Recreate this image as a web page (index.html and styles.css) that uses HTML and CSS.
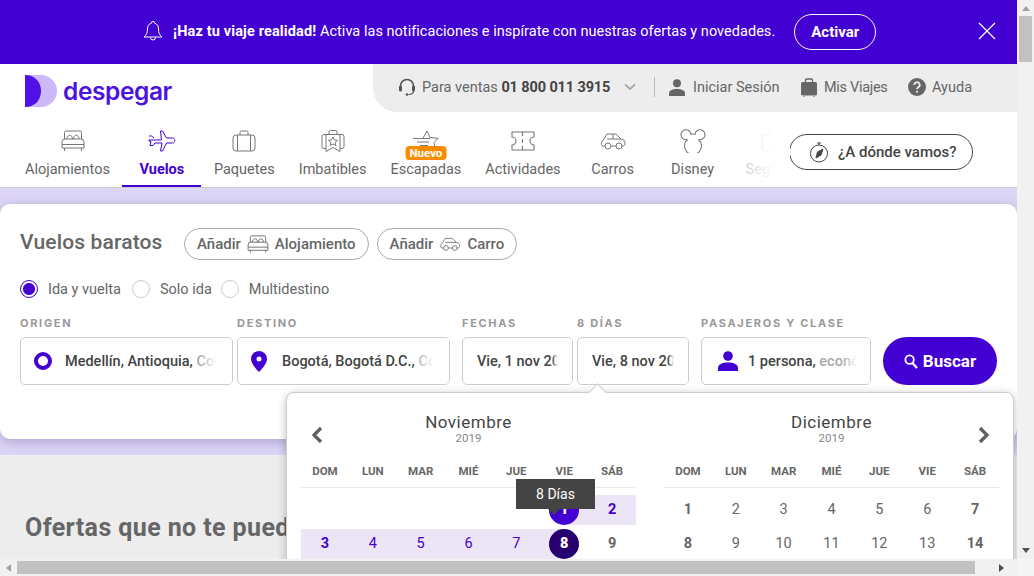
FILE: index.html
```html
<!DOCTYPE html>
<html lang="es">
<head>
<meta charset="utf-8">
<title>Vuelos baratos</title>
<link rel="stylesheet" href="styles.css">
</head>
<body>
<div class="app">
  <div class="viewport">
    <section class="banner">
      <svg class="bell" width="20" height="22" viewBox="0 0 20 22" fill="none" stroke="#fff" stroke-width="1"><path d="M10 1.500a1.600 1.600 0 0 1 1.600 1.700C14.400 4 15.500 6 15.500 9c0 4 1 6 3.500 8H1c2.500-2 3.500-4 3.500-8 0-3 1.100-5 3.900-5.800A1.600 1.600 0 0 1 10 1.500z"/><path d="M7.500 17.500a2.500 2.500 0 0 0 5 0"/></svg>
      <p class="banner-text"><strong>¡Haz tu viaje realidad!</strong> Activa las notificaciones e inspírate con nuestras ofertas y novedades.</p>
      <span class="activate">Activar</span>
      <svg class="close" width="18" height="18" viewBox="0 0 18 18" stroke="#fff" stroke-width="1.200"><path d="M1 1l16 16M17 1L1 17"/></svg>
    </section>

    <header class="topbar">
      <a class="logo">
        <svg width="32" height="32" viewBox="0 0 32 32"><path d="M0 0h16a16 16 0 0 1 0 32H0z" fill="#cbb9f9"/><path d="M0 0c10 0 16 7 16 16S10 32 0 32z" fill="#5010e6"/></svg>
        <span class="logo-text">despegar</span>
      </a>
      <div class="util">
        <svg class="u-head" width="18" height="18" viewBox="0 0 18 18" fill="none"><path d="M2.500 11V8a6.500 6.500 0 0 1 13 0v3" stroke="#555" stroke-width="1.600"/><rect x="1" y="7.500" width="3" height="6" rx="1.500" fill="#555"/><rect x="14" y="7.500" width="3" height="6" rx="1.500" fill="#555"/><path d="M15.500 13c0 2.500-2 3.500-5 3.500" stroke="#555" stroke-width="1.200"/><circle cx="9" cy="16.500" r="1.300" fill="#555"/></svg>
        <span class="sales">Para ventas <b>01 800 011 3915</b></span>
        <svg class="u-chev" width="12" height="8" viewBox="0 0 12 8" fill="none" stroke="#aaa" stroke-width="2"><path d="M1 1.500l5 4.500 5-4.500"/></svg>
        <i class="u-div"></i>
        <svg class="u-user" width="16" height="17" viewBox="0 0 16 17" fill="#666"><circle cx="8" cy="4.300" r="4"/><path d="M0 17v-2.500C0 11.500 3 10 8 10s8 1.500 8 4.500V17z"/></svg>
        <span class="u-login">Iniciar Sesión</span>
        <svg class="u-bag" width="18" height="19" viewBox="0 0 18 19"><path d="M5.500 4V2a1 1 0 0 1 1-1h5a1 1 0 0 1 1 1v2" fill="none" stroke="#666" stroke-width="1.300"/><rect x="1" y="4" width="16" height="13.500" rx="1.500" fill="#666"/><path d="M4 18v1M14 18v1" stroke="#666"/></svg>
        <span class="u-trips">Mis Viajes</span>
        <svg class="u-help" width="18" height="18" viewBox="0 0 18 18"><circle cx="9" cy="9" r="9" fill="#666"/><path d="M6.300 7a2.700 2.700 0 1 1 4 2.300C9.300 9.900 9 10.300 9 11.200" fill="none" stroke="#ededed" stroke-width="1.800"/><circle cx="9" cy="13.800" r="1.100" fill="#ededed"/></svg>
        <span class="u-aid">Ayuda</span>
      </div>
    </header>

    <nav class="nav">
      <a class="nav-item">
        <svg class="bed" width="24" height="22" viewBox="0 0 24 22" fill="none" stroke="#777" stroke-width="1"><path d="M3.500 9V2.500A1.500 1.500 0 0 1 5 1h14a1.500 1.500 0 0 1 1.500 1.500V9"/><path d="M6 9c0-5 5.500-5 5.500 0M12.500 9c0-5 5.500-5 5.500 0"/><path d="M1 12a3 3 0 0 1 3-3h16a3 3 0 0 1 3 3v6H1zM1 14.500h22M3.500 18v3M20.500 18v3"/></svg>
        <span>Alojamientos</span>
      </a>
      <a class="nav-item active">
        <svg width="28" height="22" viewBox="0 0 28 22" fill="none" stroke="#4300d2" stroke-width="1"><path d="M12.500 1h2l4 7h6c3 0 3 5 0 5h-6l-4 8h-2l1.500-8H7l-2 2.500H2l1-4-2-.5v-1h9l3.500-.2L12.500 1zM1 6h2.500L6 8"/></svg>
        <span>Vuelos</span>
      </a>
      <a class="nav-item">
        <svg width="24" height="22" viewBox="0 0 24 22" fill="none" stroke="#777" stroke-width="1"><rect x="1" y="5" width="22" height="16" rx="3"/><path d="M8 5V2.500A1.500 1.500 0 0 1 9.500 1h5A1.500 1.500 0 0 1 16 2.500V5M5.500 5v16M18.500 5v16"/></svg>
        <span>Paquetes</span>
      </a>
      <a class="nav-item">
        <svg width="24" height="23" viewBox="0 0 24 23" fill="none" stroke="#777" stroke-width="1"><path d="M5 5H3a2 2 0 0 0-2 2v10a2 2 0 0 0 2 2h2M19 5h2a2 2 0 0 1 2 2v10a2 2 0 0 1-2 2h-2M8 5V2.500A1.500 1.500 0 0 1 9.500 1h5A1.500 1.500 0 0 1 16 2.500V5M5 5h14v17l-7-4-7 4z"/><path d="M12 7.500l1.400 2.900 3.100.4-2.300 2.100.6 3.100-2.800-1.500-2.800 1.500.6-3.100-2.300-2.100 3.100-.4z"/></svg>
        <span>Imbatibles</span>
      </a>
      <a class="nav-item">
        <svg width="28" height="22" viewBox="0 0 28 22" fill="none" stroke="#777" stroke-width="1"><path d="M11 8L15 1l3 6.500 8 .8-4 4.200 1 6M1 8.500h17M5 12h12M8 15.500h8"/></svg>
        <em class="badge">Nuevo</em>
        <span>Escapadas</span>
      </a>
      <a class="nav-item">
        <svg width="24" height="20" viewBox="0 0 24 20" fill="none" stroke="#777" stroke-width="1.100"><path d="M1 1h22v5a4 4 0 0 0 0 8v5H1v-5a4 4 0 0 0 0-8zM11.500 1v4M11.500 8v4M11.500 15v4"/></svg>
        <span>Actividades</span>
      </a>
      <a class="nav-item">
        <svg width="26" height="20" viewBox="0 0 26 20" fill="none" stroke="#777" stroke-width="1"><path d="M5 15H3c-2 0-2-3-1-4.500L4 8l3-5h9l5 5c3 .5 4 1.500 4 4 0 2-1 3-2 3h-2M11 15h5M7 8h14M13 3v5"/><circle cx="8" cy="15" r="3"/><circle cx="19" cy="15" r="3"/></svg>
        <span>Carros</span>
      </a>
      <a class="nav-item">
        <svg width="26" height="24" viewBox="0 0 26 24" fill="none" stroke="#777" stroke-width="1.100"><path d="M7.500 10.500A5 5 0 1 1 11 5.200a8.500 8.500 0 0 1 4 0 5 5 0 1 1 3.500 5.300 8.500 8.500 0 1 1-11 0z"/></svg>
        <span>Disney</span>
      </a>
      <a class="nav-item faded">
        <svg width="24" height="22" viewBox="0 0 24 22" fill="none" stroke="#888" stroke-width="1"><rect x="1" y="5" width="22" height="16" rx="3"/><path d="M8 5V2.500A1.500 1.500 0 0 1 9.500 1h5A1.500 1.500 0 0 1 16 2.500V5M12 10v6M9 13h6"/></svg>
        <span>Seguros</span>
      </a>
      <a class="explore">
        <svg width="20" height="21" viewBox="0 0 20 21" fill="none" stroke="#444" stroke-width="1"><circle cx="10" cy="11.500" r="8.500"/><path d="M8 1h4M10 1v2"/><path d="M14 7l-5.500 3-1.500 6 5-3z" fill="#444"/></svg>
        <span>¿A dónde vamos?</span>
      </a>
    </nav>

    <section class="hero">
      <div class="card">
        <div class="title-row">
          <h1>Vuelos baratos</h1>
          <a class="pill">Añadir
            <svg width="22" height="18" viewBox="0 0 24 20" fill="none" stroke="#666" stroke-width="1"><path d="M3.500 8V2.500A1.500 1.500 0 0 1 5 1h14a1.500 1.500 0 0 1 1.500 1.500V8"/><path d="M6 8c0-5 5.500-5 5.500 0M12.500 8c0-5 5.500-5 5.500 0"/><path d="M1 11a3 3 0 0 1 3-3h16a3 3 0 0 1 3 3v6H1zM1 13.500h22M3.500 17v2.500M20.500 17v2.500"/></svg>
            Alojamiento</a>
          <a class="pill">Añadir
            <svg width="22" height="16" viewBox="0 0 26 20" fill="none" stroke="#666" stroke-width="1"><path d="M5 15H3c-2 0-2-3-1-4.500L4 8l3-5h9l5 5c3 .5 4 1.500 4 4 0 2-1 3-2 3h-2M11 15h5M7 8h14"/><circle cx="8" cy="15" r="3"/><circle cx="19" cy="15" r="3"/></svg>
            Carro</a>
        </div>
        <div class="trip-type">
          <label class="radio on"><i></i>Ida y vuelta</label>
          <label class="radio"><i></i>Solo ida</label>
          <label class="radio"><i></i>Multidestino</label>
        </div>
        <div class="form-row">
          <div class="col w213">
            <span class="lbl">ORIGEN</span>
            <div class="field">
              <i class="ring"></i>
              <span class="val">Medellín, Antioquia, <u>Colombia</u></span>
            </div>
          </div>
          <div class="col w213">
            <span class="lbl">DESTINO</span>
            <div class="field">
              <svg class="pin" width="16" height="21" viewBox="0 0 16 21"><path fill-rule="evenodd" fill="#4300d2" d="M8 0a8 8 0 0 1 8 8c0 4-4 9-8 13C4 17 0 12 0 8a8 8 0 0 1 8-8zm0 5.500a2.500 2.500 0 1 0 0 5 2.500 2.500 0 0 0 0-5z"/></svg>
              <span class="val">Bogotá, Bogotá D.C., <u>Colombia</u></span>
            </div>
          </div>
          <div class="col w111 mleft8">
            <span class="lbl">FECHAS</span>
            <div class="field date"><span class="val">Vie, 1 nov 2019</span></div>
          </div>
          <div class="col w112">
            <span class="lbl">8 DÍAS</span>
            <div class="field date"><span class="val">Vie, 8 nov 2019</span></div>
          </div>
          <div class="col w170 mleft8">
            <span class="lbl">PASAJEROS Y CLASE</span>
            <div class="field pax">
              <svg class="pax-icon" width="20" height="20" viewBox="0 0 20 20" fill="#4300d2"><circle cx="10" cy="5" r="4.800"/><path d="M0 20v-3c0-3.500 4-5.500 10-5.500s10 2 10 5.500v3z"/></svg>
              <span class="val">1 persona, <u>económica</u></span>
            </div>
          </div>
          <a class="search">
            <svg width="14" height="15" viewBox="0 0 15 16" fill="none" stroke="#fff" stroke-width="2"><circle cx="6" cy="6" r="4.500"/><path d="M9 9.500l5 5.500" stroke-width="2.400"/></svg>
            Buscar
          </a>
        </div>
      </div>
    </section>

    <section class="offers">
      <h2>Ofertas que no te puedes perder</h2>
    </section>

    <div class="calendar">
      <i class="cal-arrow"></i>
      <div class="month">
        <svg class="cal-nav prev" width="13" height="18" viewBox="0 0 13 18" fill="none" stroke="#5f5f5f" stroke-width="3.200"><path d="M11 2L4 9l7 7"/></svg>
        <div class="m-title">Noviembre</div>
        <div class="m-year">2019</div>
        <div class="week"><span>DOM</span><span>LUN</span><span>MAR</span><span>MIÉ</span><span>JUE</span><span>VIE</span><span>SÁB</span></div>
        <div class="days">
          <span></span><span></span><span></span><span></span><span></span>
          <span class="sel start"><b>1</b></span><span class="range bold">2</span>
          <span class="range bold">3</span><span class="range">4</span><span class="range">5</span><span class="range">6</span><span class="range">7</span>
          <span class="sel end"><b>8</b></span><span class="bold">9</span>
        </div>
        <div class="tooltip">8 Días</div>
      </div>
      <div class="month">
        <svg class="cal-nav next" width="13" height="18" viewBox="0 0 13 18" fill="none" stroke="#5f5f5f" stroke-width="3.200"><path d="M2 2l7 7-7 7"/></svg>
        <div class="m-title">Diciembre</div>
        <div class="m-year">2019</div>
        <div class="week"><span>DOM</span><span>LUN</span><span>MAR</span><span>MIÉ</span><span>JUE</span><span>VIE</span><span>SÁB</span></div>
        <div class="days">
          <span class="bold">1</span><span>2</span><span>3</span><span>4</span><span>5</span><span>6</span><span class="bold">7</span>
          <span class="bold">8</span><span>9</span><span>10</span><span>11</span><span>12</span><span>13</span><span class="bold">14</span>
        </div>
      </div>
    </div>
  </div>

  <div class="vbar">
    <i class="tri up"></i>
    <i class="v-thumb"></i>
    <i class="tri down"></i>
  </div>
  <div class="hbar">
    <i class="tri left"></i>
    <i class="h-thumb"></i>
    <i class="tri right"></i>
  </div>
  <div class="corner"></div>
</div>
</body>
</html>
```

FILE: styles.css
```css
* { box-sizing: border-box; }
html, body { margin: 0; height: 100%; overflow: hidden; }
body { font-family: Roboto, "Liberation Sans", sans-serif; color: #666; background: #fff; }
a { display: inline-flex; text-decoration: none; }
i, em { font-style: normal; display: block; }
u { text-decoration: none; color: #aaa; }
p, h1, h2 { margin: 0; }

.app { display: grid; grid-template-columns: 1017px 17px; grid-template-rows: 559px 17px; width: 1034px; height: 576px; }
.viewport { position: relative; overflow: hidden; background: #ededed; }

/* scrollbars */
.vbar { display: flex; flex-direction: column; align-items: center; background: #f1f1f1; }
.v-thumb { width: 13px; height: 46px; margin: 5px 0 auto; background: #c1c1c1; }
.hbar { display: flex; align-items: center; background: #f1f1f1; padding-right: 13px; }
.h-thumb { width: 958px; height: 13px; margin: 0 auto 0 6px; background: #c1c1c1; }
.corner { background: #f5f5f5; }
.tri { width: 0; height: 0; border-style: solid; border-color: transparent; }
.up { margin-top: 6px; border-width: 0 4px 5px; border-bottom-color: #a3a3a3; }
.down { margin-bottom: 6px; border-width: 5px 4px 0; border-top-color: #505050; }
.left { margin-left: 6px; border-width: 4px 5px 4px 0; border-right-color: #a3a3a3; }
.right { border-width: 4px 0 4px 5px; border-left-color: #505050; }

/* banner */
.banner { display: flex; align-items: center; height: 64px; padding: 0 21px 2px 143px; background: #4300d2; color: #fff; }
.bell { flex: none; margin-right: 10px; }
.banner-text { font-size: 14.500px; white-space: nowrap; letter-spacing: .035px; }
.banner-text strong { font-weight: 700; letter-spacing: .13px; }
.activate { display: flex; justify-content: center; align-items: center; width: 82px; height: 36px; margin: 2px 0 0 19px; border: 1px solid #fff; border-radius: 18px; font-size: 15px; font-weight: 700; }
.close { margin: 0 0 0 auto; }

/* top bar */
.topbar { display: flex; height: 48px; background: #fff; }
.logo { align-items: center; gap: 6px; padding: 5px 0 0 25px; }
.logo-text { font-family: Inter, sans-serif; font-size: 24.500px; font-weight: 600; color: #4c12e0; letter-spacing: -.4px; }
.util { display: flex; align-items: center; width: 644px; margin-left: auto; padding: 0 0 2px 25px; background: #ededed; border-bottom-left-radius: 24px; font-size: 14.500px; color: #666; white-space: nowrap; }
.sales { margin-left: 6px; width: 188px; }
.sales b { color: #444; font-weight: 700; letter-spacing: -.12px; }
.u-chev { margin-left: 14px; }
.u-div { width: 1px; height: 20px; margin-left: 18px; background: #bbb; }
.u-user { margin-left: 14px; }
.u-login { width: 86px; margin-left: 8px; }
.u-bag { margin-left: 21px; }
.u-trips { width: 64px; margin-left: 6px; letter-spacing: -.3px; }
.u-help { margin-left: 20px; }
.u-aid { margin-left: 6px; }

/* nav */
.nav { position: relative; display: flex; height: 76px; padding-left: 13px; background: #fff; border-bottom: 1px solid #ccc; overflow: hidden; }
.nav-item { position: relative; flex-direction: column; align-items: center; height: 75px; min-width: 80px; padding: 17px 12px 0; font-size: 14.500px; color: #666; white-space: nowrap; }
.nav-item svg { height: 24px; }
.nav-item span { margin-top: 8px; }
.nav-item .bed { position: relative; left: 6px; }
.nav-item.active { color: #4300d2; font-weight: 700; }
.nav-item.active::after { content: ""; position: absolute; left: 0; bottom: 0; width: 79px; height: 2px; background: #4300d2; }
.nav-item.faded { align-items: flex-start; width: 56px; min-width: 0; padding-left: 13px; overflow: hidden; opacity: .3; }
.nav-item.faded svg { flex: none; margin-left: 15px; }
.badge { position: absolute; left: 50%; top: 34px; transform: translateX(-50%); padding: 0 4px; height: 14px; line-height: 14px; border-radius: 4px; background: #fb8c00; color: #fff; font-size: 11.500px; font-weight: 700; }
.explore { position: absolute; left: 789px; top: 22px; align-items: center; gap: 9px; width: 184px; height: 36px; padding-left: 19px; background: #fff; border: 1px solid #444; border-radius: 18px; color: #444; font-size: 15px; font-weight: 500; white-space: nowrap; }
.explore::before { content: ""; position: absolute; right: 100%; top: -23px; bottom: -20px; width: 44px; background: linear-gradient(90deg, rgba(255,255,255,0), #fff 65%); }

/* hero */
.hero { height: 267px; padding-top: 16px; background: #dcd5f5; }
.card { height: 235px; padding: 24px 20px 0; background: #fff; border-radius: 10px; box-shadow: 0 3px 12px rgba(60, 40, 120, .28); }
.title-row { display: flex; align-items: center; gap: 8px; }
h1 { width: 156px; margin-bottom: 4px; font-size: 21px; font-weight: 500; color: #666; letter-spacing: .15px; white-space: nowrap; }
.pill { align-items: center; gap: 6px; height: 32px; padding: 0 12px; background: #fff; border: 1px solid #aaa; border-radius: 16px; font-size: 15px; font-weight: 500; color: #666; white-space: nowrap; }
.trip-type { display: flex; gap: 10px; margin-top: 20px; height: 18px; }
.radio { display: flex; align-items: center; gap: 10px; font-size: 14.500px; color: #666; }
.radio.on { margin-right: 1px; }
.radio:last-child { margin-left: -1px; }
.radio i { width: 18px; height: 18px; border: 1px solid #ccc; border-radius: 50%; }
.radio.on i { border-color: #4300d2; background: radial-gradient(circle, #4300d2 0 5.500px, #fff 6.500px); }
.form-row { display: flex; align-items: flex-end; gap: 4px; margin-top: 17px; }
.col { display: flex; flex-direction: column; gap: 5px; }
.w213 { width: 213px; }
.w111 { width: 111px; }
.w112 { width: 112px; }
.w170 { width: 170px; }
.mleft8 { margin-left: 8px; }
.lbl { height: 17px; line-height: 17px; font-family: Inter, sans-serif; font-size: 11px; font-weight: 700; letter-spacing: 1.700px; color: #999; white-space: nowrap; }
.field { position: relative; display: flex; align-items: center; height: 48px; padding-left: 13px; background: #fff; border: 1px solid #ccc; border-radius: 5px; overflow: hidden; }
.field::after { content: ""; position: absolute; top: 0; right: 0; bottom: 0; width: 33px; background: linear-gradient(90deg, rgba(255,255,255,0), #fff 55%); }
.date::after { width: 20px; background: linear-gradient(90deg, rgba(255,255,255,0), #fff 30%); }
.pax::after { width: 28px; }
.val { font-size: 14.500px; font-weight: 500; color: #444; white-space: nowrap; }
.ring { flex: none; width: 18px; height: 18px; margin-right: 13px; border: 4px solid #4300d2; border-radius: 50%; }
.pin { flex: none; margin-right: 15px; }
.date { padding-left: 14px; }
.pax { padding-left: 16px; }
.pax-icon { flex: none; margin-right: 10px; }
.search { align-items: center; justify-content: center; gap: 5px; width: 114px; height: 48px; margin-left: 8px; background: #4300d2; border-radius: 24px; color: #fff; font-size: 17px; font-weight: 700; }

/* offers */
.offers { height: 104px; padding: 58px 25px 0; }
h2 { width: 262px; overflow: hidden; font-size: 25px; font-weight: 700; color: #666; letter-spacing: .4px; white-space: nowrap; }

/* calendar */
.calendar { position: absolute; left: 286px; top: 392px; display: flex; gap: 28px; width: 728px; height: 260px; padding: 17px 14px 0; background: #fff; border: 1px solid #ccc; border-radius: 8px; box-shadow: 0 2px 10px rgba(0,0,0,.25); }
.cal-arrow { position: absolute; left: 304px; top: -7px; width: 13px; height: 13px; background: #fff; border: 1px solid #ccc; border-right: 0; border-bottom: 0; transform: rotate(45deg); }
.month { position: relative; width: 335px; text-align: center; flex: none; }
.m-title { font-size: 17px; line-height: 24px; color: #444; letter-spacing: .5px; }
.m-year { margin-top: -3px; font-size: 11.500px; line-height: 14px; color: #888; }
.cal-nav { position: absolute; top: 16px; }
.prev { left: 9px; }
.next { right: 8px; }
.week { display: grid; grid-template-columns: repeat(7, 1fr); height: 25px; margin-top: 18px; border-bottom: 1px solid #e8e8e8; font-size: 11.500px; font-weight: 700; line-height: 17px; color: #666; }
.days { display: grid; grid-template-columns: repeat(7, 1fr); grid-auto-rows: 30px; row-gap: 4px; margin-top: 7px; font-size: 14.500px; line-height: 30px; color: #666; }
.days span { position: relative; display: flex; align-items: flex-start; justify-content: center; }
.bold { font-weight: 700; }
.range { background: #ebe5f6; color: #4300d2; }
.sel { color: #fff; font-weight: 700; }
.sel b { position: relative; display: flex; justify-content: center; width: 30px; height: 30px; border-radius: 50%; }
.sel.start { background: linear-gradient(90deg, transparent 50%, #ebe5f6 50%); }
.sel.start b { background: #4300d2; }
.sel.end { background: linear-gradient(90deg, #ebe5f6 50%, transparent 50%); }
.sel.end b { background: #26006e; }
.range.bold { color: #4300d2; }
.tooltip { position: absolute; left: 215px; top: 69px; width: 79px; height: 30px; line-height: 30px; background: #444; color: #fff; font-size: 14px; }
.tooltip::after { content: ""; position: absolute; left: 32px; top: 30px; border: 6px solid transparent; border-bottom: 0; border-top-color: #444; }
```
